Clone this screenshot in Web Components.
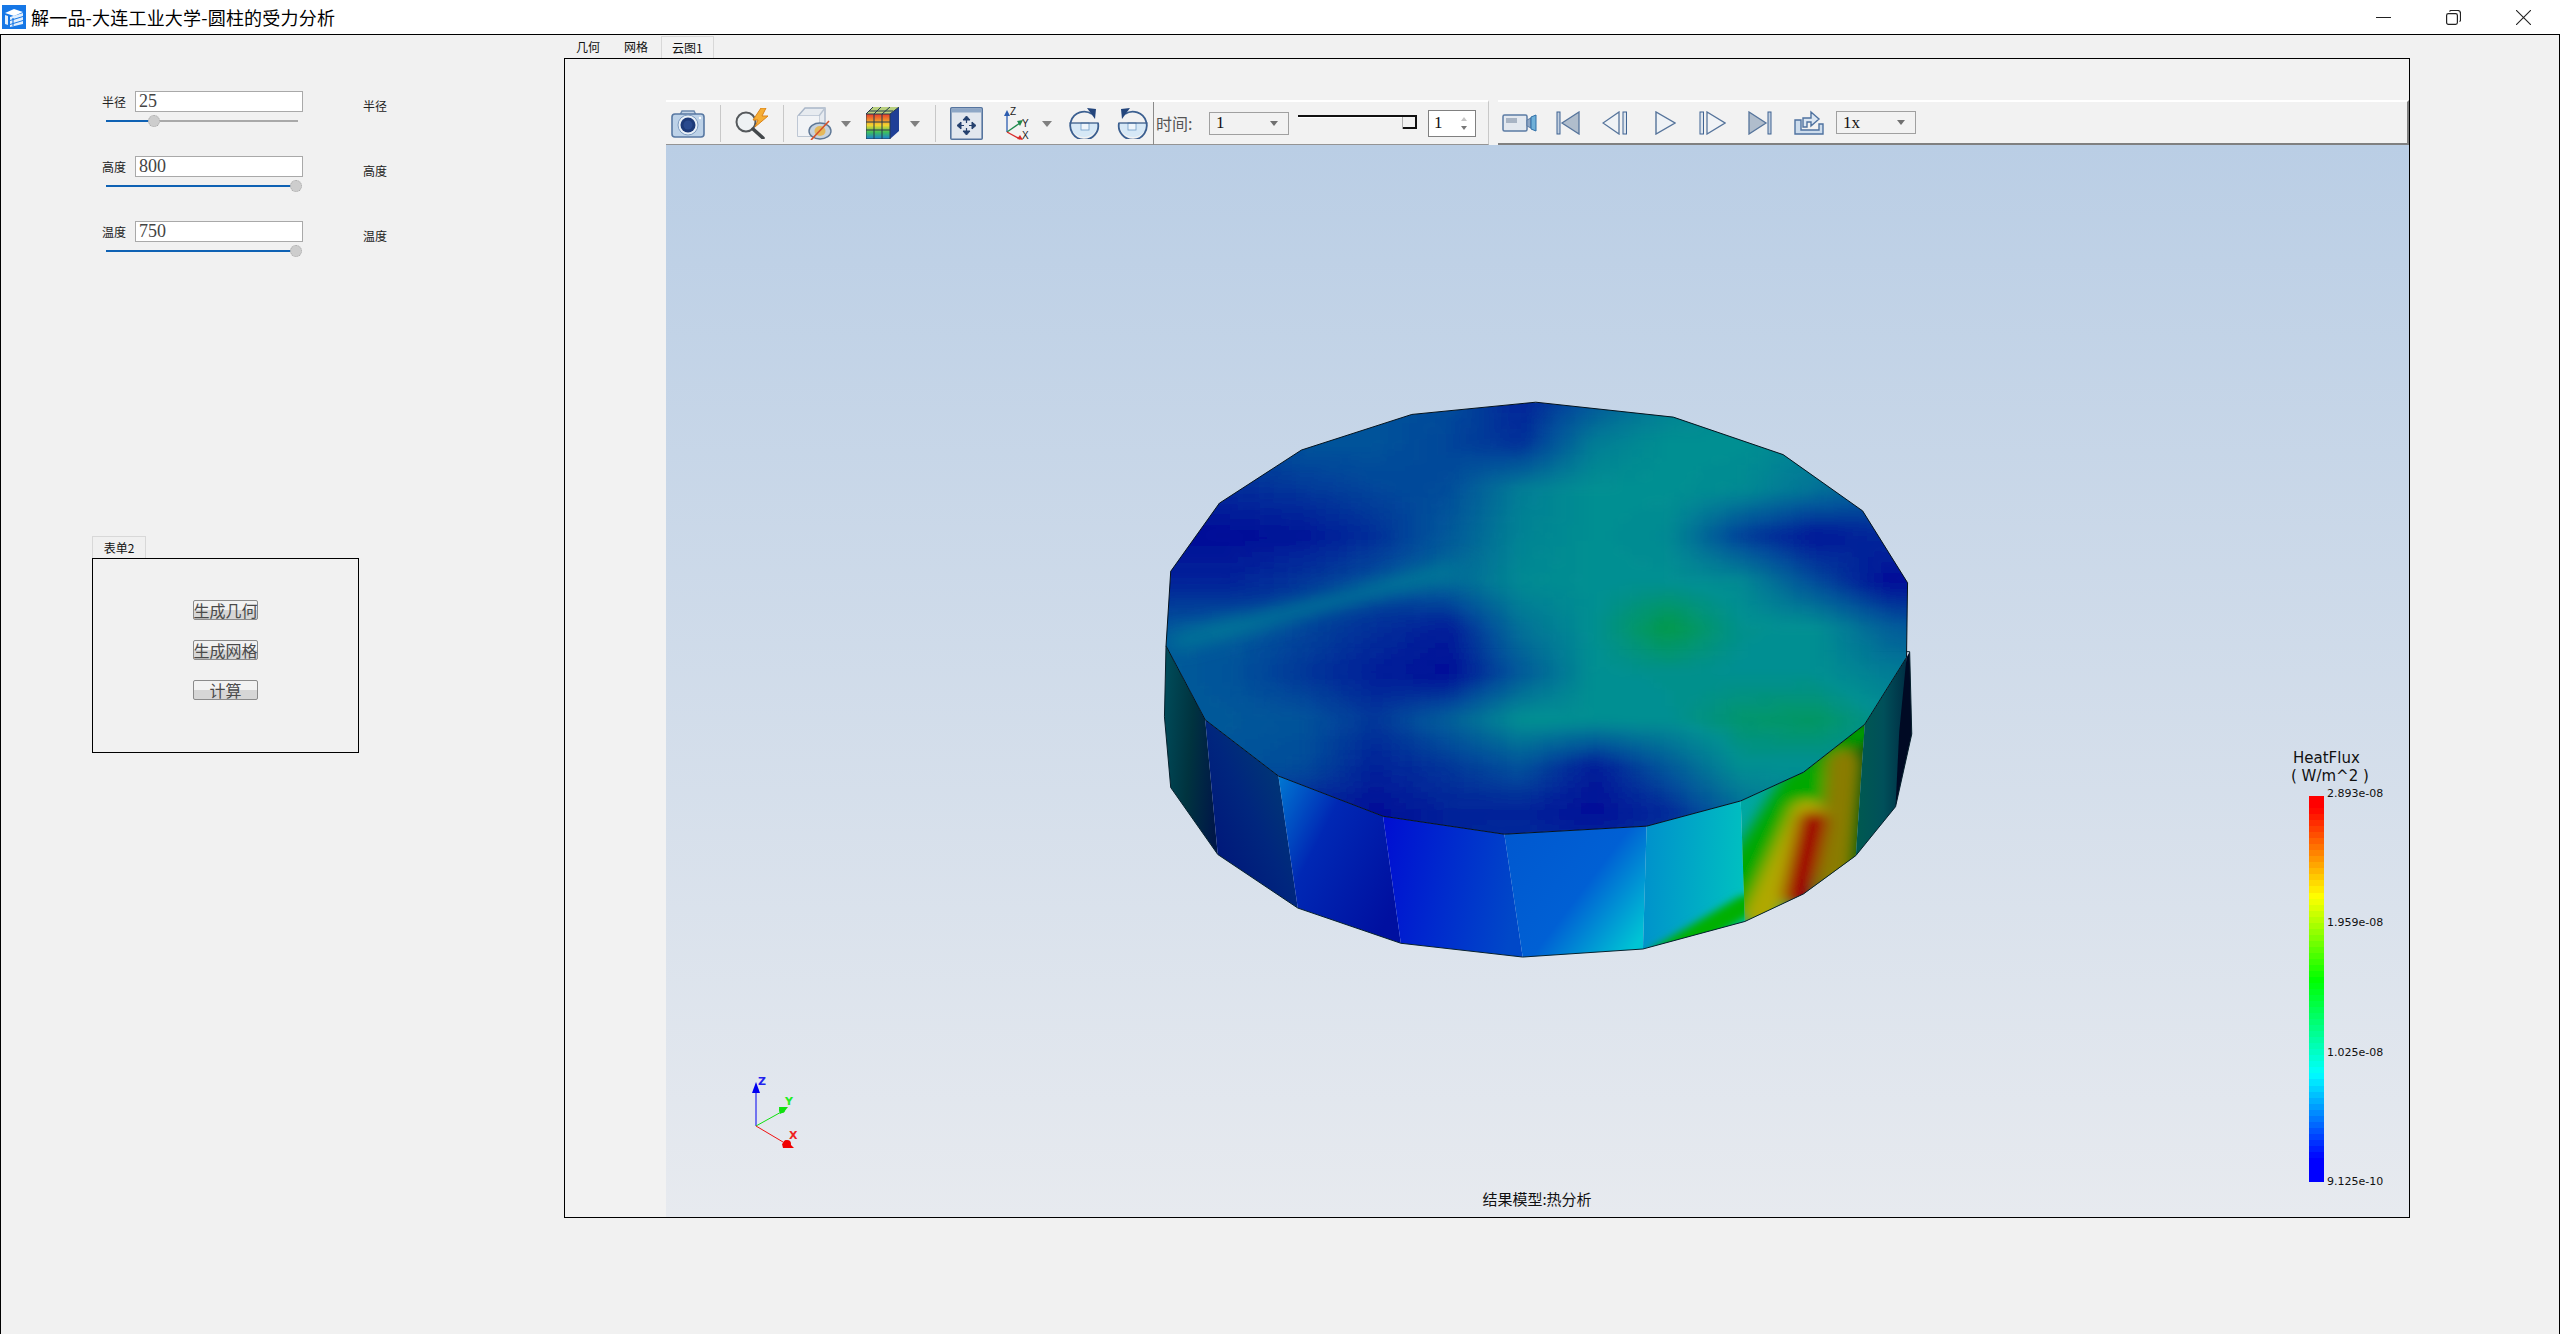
<!DOCTYPE html>
<html lang="zh">
<head>
<meta charset="utf-8">
<title>解一品-大连工业大学-圆柱的受力分析</title>
<style>
  html, body { margin: 0; height: 100%; overflow: hidden; background: #f0f0f0; }
  body { font-family: "Noto Sans CJK SC", "Liberation Sans", sans-serif; }
</style>
</head>
<body>
<app-window></app-window>

<script>
const CJK = '"Noto Sans CJK SC", "Noto Sans", sans-serif';
const SERIF = '"Liberation Serif", "Noto Sans CJK SC", serif';

// Base: every element only has to give its markup
class ShadowEl extends HTMLElement {
  constructor() {
    super();
    this.attachShadow({ mode: 'open' });
  }
  connectedCallback() {
    this.shadowRoot.innerHTML = this.render();
  }
}

// Toolbar icons, one svg per name
const ICONS = {
  camera: [34, 29, `
    <path d="M9 6l2-4h12l2 4" fill="#c4d4e6" stroke="#6d8bb0" stroke-width="1.5"/>
    <rect x="1" y="5" width="32" height="23" rx="3" fill="#bdd2e8" stroke="#5878a2" stroke-width="1.6"/>
    <circle cx="17" cy="16" r="10" fill="#e9f0f7" stroke="#7f9cc0"/>
    <circle cx="17" cy="16" r="7.5" fill="#1d3a78"/>
    <circle cx="17" cy="16" r="4.5" fill="#2a4a8e"/>
    <circle cx="29" cy="9" r="1.2" fill="#fff"/>`],
  search: [35, 31, `
    <circle cx="12" cy="14" r="9.5" fill="#eef2f4" stroke="#55595c" stroke-width="2"/>
    <path d="M19 21l10 9" stroke="#44484b" stroke-width="3.500" stroke-linecap="round"/>
    <path d="M27 0L19 12h5l-3 7 13-11h-6l4-8z" fill="#f6ae35" stroke="#d9831a"/>`],
  hide: [35, 33, `
    <path d="M1 9l7-8h20v21l-6 7H1z" fill="#e7ebf0" stroke="#a9b6c8" stroke-width="1.4"/>
    <path d="M1 9h21v20M22 9l6-8" fill="none" stroke="#b9c4d2" stroke-width="1.4"/>
    <path d="M1 9h21v20H1z" fill="#f1f3f6"/>
    <ellipse cx="23" cy="24" rx="11" ry="8" fill="#c7d3df" stroke="#5f7896" stroke-width="1.4"/>
    <ellipse cx="23" cy="24" rx="5.5" ry="5" fill="#e5b95b"/>
    <path d="M32 14L14 33" stroke="#d5512a" stroke-width="1.6"/>`],
  colors: [33, 32, `
    <defs><linearGradient id="cc" x1="0" y1="0" x2="0" y2="1">
      <stop offset="0" stop-color="#e83a2a"/><stop offset=".45" stop-color="#f4d62f"/>
      <stop offset=".72" stop-color="#3fc05a"/><stop offset="1" stop-color="#1b7fd8"/></linearGradient></defs>
    <path d="M0 7h24v25H0z" fill="url(#cc)"/>
    <path d="M0 7l7-7h26l-9 7z" fill="#b9d07f"/>
    <path d="M24 7l9-7v24l-9 8z" fill="#1f3f96"/>
    <path d="M0 7h24v25H0zM8 7v25M16 7v25M0 15h24M0 23h24M24 7l9-7M7 0l-7 7M15 0l-7 7M24 0l-8 7M3 4h24" fill="none" stroke="#24384f" stroke-width="1"/>`],
  fit: [33, 33, `
    <rect x=".8" y=".8" width="31.4" height="31.4" rx="1" fill="#e2e7ee" stroke="#56759f" stroke-width="1.6"/>
    <rect x="1.5" y="1.5" width="30" height="4" fill="#8ea7c6"/>
    <g fill="#24406e" stroke="#24406e">
      <path d="M16.500 9l-3.500 4h7zM16.500 28l-3.500-4h7zM7 18.500l4-3.500v7zM26 18.500l-4-3.500v7z"/>
      <path d="M16.500 12v4M16.500 21v4M10 18.500h4M19 18.500h4" stroke-width="1.2"/>
    </g>`],
  axes: [28, 33, `
    <path d="M5 25V7" stroke="#2b5cb0" stroke-width="1.3"/><path d="M5 3l-3 6h6z" fill="#2b5cb0"/>
    <path d="M5 25l13-9" stroke="#1f8a4c" stroke-width="1.3"/><path d="M21 13l-6 1 3 5z" fill="#1f8a4c"/>
    <path d="M5 25l13 7" stroke="#d92b2b" stroke-width="1.3"/><path d="M21 33l-6-1 3-4z" fill="#d92b2b"/>
    <g font-family="Liberation Sans, sans-serif" font-size="10" fill="#222">
      <text x="8" y="8">Z</text><text x="20" y="20">Y</text><text x="20" y="32">X</text></g>`],
  rotR: [32, 31, `
    <path d="M2 15a14 14 0 0 0 28 0z" fill="#d6e8f6"/>
    <rect x="13" y="15" width="8" height="7" fill="#eef5fb" stroke="#6f9cc8" stroke-width=".8"/>
    <path d="M1.500 15h29" stroke="#2c4f80" stroke-width="1.2"/>
    <path d="M24 6A14 14 0 1 0 30 15" fill="none" stroke="#3b5f90" stroke-width="1.800"/>
    <path d="M19 0l9 1-1 10z" fill="#24467c"/>`],
  rotL: [31, 31, `
    <path d="M30 15a14 14 0 0 1-28 0z" fill="#d6e8f6"/>
    <rect x="11" y="15" width="8" height="7" fill="#eef5fb" stroke="#6f9cc8" stroke-width=".8"/>
    <path d="M30.500 15h-29" stroke="#2c4f80" stroke-width="1.2"/>
    <path d="M8 6A14 14 0 1 1 2 15" fill="none" stroke="#3b5f90" stroke-width="1.800"/>
    <path d="M13 0L4 1l1 10z" fill="#24467c"/>`],
  video: [35, 18, `
    <rect x="1" y="1" width="24" height="16" rx="1.500" fill="#e3e8ef" stroke="#5b7ba4" stroke-width="1.500"/>
    <rect x="4" y="4" width="11" height="5" fill="#a8b4c4"/>
    <path d="M25 6l4-2v10l-4-2z" fill="#8ea6c4" stroke="#5b7ba4"/>
    <path d="M29 3l5-2v16l-5-2z" fill="#6fb0d8" stroke="#2f6fa8"/>`],
  first: [24, 24, `
    <rect x="1" y="1" width="3" height="22" fill="#c3d0e0" stroke="#3f6392"/>
    <path d="M23 1v22L6 12z" fill="#b0bdcc" stroke="#56749b" stroke-width="1.300"/>`],
  prev: [28, 24, `
    <path d="M17 1v22L1 12z" fill="#f0f3f6" stroke="#56749b" stroke-width="1.300"/>
    <rect x="21" y="1" width="3.500" height="22" fill="#dfe6ee" stroke="#3f6392"/>`],
  play: [21, 24, `<path d="M1 1v22l19-11z" fill="#eef2f6" stroke="#56749b" stroke-width="1.400"/>`],
  next: [27, 24, `
    <rect x="1" y="1" width="3.500" height="22" fill="#dfe6ee" stroke="#3f6392"/>
    <path d="M8 1v22l18-11z" fill="#f0f3f6" stroke="#56749b" stroke-width="1.300"/>`],
  last: [25, 24, `
    <path d="M1 1v22l17-11z" fill="#b0bdcc" stroke="#56749b" stroke-width="1.300"/>
    <rect x="20" y="1" width="3" height="22" fill="#c3d0e0" stroke="#3f6392"/>`],
  share: [30, 25, `
    <path d="M1 10h6v10h18v-6h4v10H1z" fill="#cddcec" stroke="#4f72a0" stroke-width="1.400"/>
    <path d="M9 17V8h8V2l8 7-8 7v-4h-4v5z" fill="#dbe6f2" stroke="#4f72a0" stroke-width="1.400"/>`]
};

class ToolIcon extends ShadowEl {
  render() {
    const [w, h, body] = ICONS[this.getAttribute('name')];
    return `<style>
      :host { display: block; flex: none; line-height: 0; }
    </style><svg width="${w}" height="${h}" viewBox="0 0 ${w} ${h}">${body}</svg>`;
  }
}
customElements.define('tool-icon', ToolIcon);

// Little grey triangle next to an icon
class DropArrow extends ShadowEl {
  render() {
    return `<style>
      :host { display: block; flex: none; width: 0; height: 0; margin-top: 2px;
              border: 5px solid transparent; border-top: 6px solid #808080; border-bottom: 0; }
    </style>`;
  }
}
customElements.define('drop-arrow', DropArrow);

class ToolSep extends ShadowEl {
  render() {
    return `<style>
      :host { display: block; flex: none; width: 1px; height: 37px; background: #c8c8c8; }
      :host([dark]) { height: 43px; background: #8a8a8a; align-self: flex-start; }
    </style>`;
  }
}
customElements.define('tool-sep', ToolSep);

class ComboBox extends ShadowEl {
  render() {
    return `<style>
      :host { display: flex; flex: none; box-sizing: border-box; width: 80px; height: 23px; align-items: center;
              justify-content: space-between; padding: 0 10px 0 6px; border: 1px solid #a0a0a0;
              font: 17px ${SERIF}; color: #111; }
      i { width: 0; height: 0; border: 4px solid transparent; border-top: 5px solid #707070; border-bottom: 0; }
    </style><slot></slot><i></i>`;
  }
}
customElements.define('combo-box', ComboBox);

class SpinBox extends ShadowEl {
  render() {
    return `<style>
      :host { display: flex; flex: none; box-sizing: border-box; width: 48px; height: 27px; align-items: center;
              justify-content: space-between; padding: 0 8px 0 5px; background: #fff; border: 1px solid #808080;
              font: 17px ${SERIF}; color: #111; }
      div { display: flex; flex-direction: column; gap: 5px; }
      i { width: 0; height: 0; border: 3px solid transparent; }
      i.up { border-bottom: 4px solid #c4c4c4; border-top: 0; }
      i.dn { border-top: 4px solid #777; border-bottom: 0; }
    </style><slot></slot><div><i class="up"></i><i class="dn"></i></div>`;
  }
}
customElements.define('spin-box', SpinBox);

// Time slider: flat line, raised square handle at the end
class TimeSlider extends ShadowEl {
  render() {
    return `<style>
      :host { display: flex; flex: none; flex-direction: column; box-sizing: border-box; width: 119px; height: 15px;
              border-top: 2px solid #111; margin-top: -1px; }
      .shine { height: 1px; background: #fff; margin-right: 14px; }
      .grip { align-self: flex-end; box-sizing: border-box; width: 14px; height: 12px; background: #f2f2f2;
              margin-top: -1px; border-right: 2px solid #111; border-bottom: 2px solid #111; box-shadow: -1px 0 0 #b0b0b0; }
    </style><div class="shine"></div><div class="grip"></div>`;
  }
}
customElements.define('time-slider', TimeSlider);

class TitleBar extends ShadowEl {
  render() {
    return `<style>
      :host { display: flex; flex: none; align-items: center; height: 34px; padding: 0 2px; background: #fff;
              font: 18px/34px ${CJK}; color: #000; letter-spacing: .2px; }
      .logo { margin-right: 5px; margin-top: 0; line-height: 0; }
      .ctl { display: flex; margin-left: auto; }
      .ctl div { display: flex; width: 70px; justify-content: center; line-height: 0; }
    </style>
    <div class="logo"><svg width="24" height="24" viewBox="0 0 24 24">
      <rect width="24" height="24" fill="#1677e6"/>
      <path d="M3 8l9-4 9 3-9 4z" fill="#fff"/>
      <path d="M3 10l3 1v9l-3-1zM8 12l13-4v3l-13 4zM8 16l13-4v3l-13 4zM8 20l13-4v3l-13 3z" fill="#e3effc"/>
      <path d="M11 13v8" stroke="#1677e6" stroke-width="1.200"/>
    </svg></div>
    <span><slot></slot></span>
    <div class="ctl">
      <div><svg width="15" height="15" viewBox="0 0 15 15"><path d="M0 7.500h15" stroke="#222"/></svg></div>
      <div><svg width="15" height="15" viewBox="0 0 15 15" fill="none" stroke="#222" stroke-width="1.200">
        <rect x=".6" y="3.600" width="10.800" height="10.800" rx="1.800"/><path d="M3.500 1.500c.3-.6.8-1 1.600-1h6.500c1.600 0 2.900 1.300 2.900 2.900v6.500c0 .8-.4 1.300-1 1.600"/></svg></div>
      <div><svg width="15" height="15" viewBox="0 0 15 15"><path d="M0 0l15 15M15 0L0 15" stroke="#222" stroke-width="1.100"/></svg></div>
    </div>`;
  }
}
customElements.define('title-bar', TitleBar);

// label + value box + slider + second label
class ParamRow extends ShadowEl {
  render() {
    const label = this.getAttribute('label');
    const pos = this.getAttribute('pos');
    return `<style>
      :host { display: grid; grid-template-columns: 24px 168px 24px; column-gap: 9px; height: 65px;
              grid-template-rows: 21px 20px; align-content: start; font: 12px/16px ${CJK}; color: #222; }
      .name { align-self: center; }
      .val { box-sizing: border-box; height: 21px; padding-left: 3px; background: #fff; border: 1px solid #a9a9a9;
             font: 18px/19px ${SERIF}; color: #444; }
      .again { margin-left: 51px; margin-top: 7px; white-space: nowrap; }
      .track { grid-column: 1 / 3; position: relative; height: 2px; width: 192px; margin: 8px 0 0 4px;
               background: #a9a9a9; }
      .fill { height: 2px; background: #0f62b4; }
      .thumb { position: absolute; top: -5px; width: 10px; height: 10px; margin-left: -5px; border-radius: 50%;
               background: #cdcdcd; border: 1px dotted #a8a8a8; box-sizing: content-box; }
    </style>
    <div class="name">${label}</div>
    <div class="val">${this.getAttribute('value')}</div>
    <div class="again">${label}</div>
    <div class="track"><div class="fill" style="width:${pos}%"></div><div class="thumb" style="left:${pos}%"></div></div>`;
  }
}
customElements.define('param-row', ParamRow);

class PushButton extends ShadowEl {
  render() {
    return `<style>
      :host { display: flex; box-sizing: border-box; width: 65px; height: 20px; justify-content: center;
              align-items: center; white-space: nowrap; border: 1px solid #8a8a8a; border-radius: 2px;
              background: linear-gradient(#f2f2f2 50%, #d6d6d6 50%); font: 16px/17px ${CJK}; color: #4a4a4a; }
    </style><slot></slot>`;
  }
}
customElements.define('push-button', PushButton);

// Group box with the "表单2" tab on its top edge
class FormTabs extends ShadowEl {
  render() {
    return `<style>
      :host { display: block; width: 267px; font: 12px/22px ${CJK}; color: #111; }
      .tab { box-sizing: border-box; width: 54px; height: 22px; text-align: center; background: #f0f0f0;
             border: 1px solid #d8d8d8; border-bottom: 0; }
      .box { box-sizing: border-box; height: 195px; border: 1px solid #000; padding-top: 41px; display: flex;
             flex-direction: column; align-items: center; gap: 20px; }
    </style>
    <div class="tab">${this.getAttribute('label')}</div>
    <div class="box"><slot></slot></div>`;
  }
}
customElements.define('form-tabs', FormTabs);

class SidePanel extends ShadowEl {
  render() {
    return `<style>
      :host { display: block; flex: none; width: 563px; box-sizing: border-box; padding: 56px 0 0 101px; }
      .lower { margin: 250px 0 0 -10px; }
    </style>
    <param-row label="半径" value="25" pos="24.500"></param-row>
    <param-row label="高度" value="800" pos="98.500"></param-row>
    <param-row label="温度" value="750" pos="98.500"></param-row>
    <div class="lower"><form-tabs label="表单2">
      <push-button>生成几何</push-button>
      <push-button>生成网格</push-button>
      <push-button>计算</push-button>
    </form-tabs></div>`;
  }
}
customElements.define('side-panel', SidePanel);

class ViewToolbar extends ShadowEl {
  render() {
    const at = (n) => `style="margin-left:${n}px"`;
    return `<style>
      :host { display: flex; flex: none; height: 45px; }
      .strip { display: flex; align-items: center; box-sizing: border-box; height: 45px; border-top: 2px solid #fff; }
      .left { width: 823px; border-bottom: 1px solid #949494; border-right: 1px solid #c8c8c8; }
      .right { flex: 1; margin-left: 9px; border-bottom: 2px solid #808080; border-right: 2px solid #808080; }
      .time { flex: none; font: 16px/20px ${CJK}; color: #555; width: 41px; white-space: nowrap; }
    </style>
    <div class="strip left">
      <tool-icon name="camera" ${at(5)}></tool-icon>
      <tool-sep ${at(15)}></tool-sep>
      <tool-icon name="search" ${at(13)}></tool-icon>
      <tool-sep ${at(14)}></tool-sep>
      <tool-icon name="hide" ${at(13)}></tool-icon>
      <drop-arrow ${at(9)}></drop-arrow>
      <tool-icon name="colors" ${at(15)}></tool-icon>
      <drop-arrow ${at(11)}></drop-arrow>
      <tool-sep ${at(15)}></tool-sep>
      <tool-icon name="fit" ${at(14)}></tool-icon>
      <tool-icon name="axes" ${at(19)}></tool-icon>
      <drop-arrow ${at(12)}></drop-arrow>
      <tool-icon name="rotR" ${at(16)}></tool-icon>
      <tool-icon name="rotL" ${at(17)}></tool-icon>
      <tool-sep dark ${at(5)}></tool-sep>
      <div class="time" ${at(2)}>时间:</div>
      <combo-box ${at(12)}>1</combo-box>
      <time-slider ${at(9)}></time-slider>
      <spin-box ${at(11)}>1</spin-box>
    </div>
    <div class="strip right">
      <tool-icon name="video" ${at(4)}></tool-icon>
      <tool-icon name="first" ${at(19)}></tool-icon>
      <tool-icon name="prev" ${at(22)}></tool-icon>
      <tool-icon name="play" ${at(25)}></tool-icon>
      <tool-icon name="next" ${at(23)}></tool-icon>
      <tool-icon name="last" ${at(22)}></tool-icon>
      <tool-icon name="share" ${at(21)}></tool-icon>
      <combo-box ${at(12)}>1x</combo-box>
    </div>`;
  }
}
customElements.define('view-toolbar', ViewToolbar);

// Result value on the top face, sampled by eye: 0 deep blue, .5 mid blue, 1 teal, above 1 green.
// Columns start at x=60, step 140. Rows start at y=40, step 120.
const TOP_FIELD = [
  [.5, .5, .5, .5, .45, .15, .5, .85, 1, 1, 1, 1],
  [.4, .4, .5, .5, .4, .25, .85, 1, 1, .9, .8, .8],
  [.15, .2, .3, .4, .45, .85, 1, 1, .95, .75, .55, .55],
  [0, 0, .05, .25, .55, .9, 1, .95, .35, .05, .2, .3],
  [.15, .15, .3, .45, .65, .95, 1, 1, .95, .45, 0, 0],
  [.5, .55, .4, .25, .1, .75, 1, 1.3, 1.02, 1, .6, .4],
  [.6, .5, .3, .12, 0, .55, 1, 1.02, 1, 1, .85, .8],
  [.55, .55, .5, .3, .6, 1, 1, 1, 1.15, 1.2, 1, 1],
  [.5, .5, .45, .15, .3, .5, .1, .55, 1, 1, 1, 1],
  [.4, .3, .15, 0, .15, .15, 0, .2, .7, 1, 1, 1],
  [.3, .2, .1, 0, .15, .25, .25, .4, .7, 1, 1, 1]
];

function fieldColor(v) {
  const stops = [[0, [0, 12, 152]], [.5, [0, 82, 154]], [1, [0, 143, 146]], [1.3, [0, 154, 72]]];
  let i = 0;
  while (i < stops.length - 2 && v > stops[i + 1][0]) i++;
  const k = (v - stops[i][0]) / (stops[i + 1][0] - stops[i][0]);
  return 'rgb(' + stops[i][1].map((c, j) => Math.round(c + (stops[i + 1][1][j] - c) * k)) + ')';
}

// Small cells grouped by colour level, so it stays a handful of paths
function topFieldPaths() {
  const levels = {};
  const cell = 14;
  for (let y = 0; y < 1260; y += cell) {
    for (let x = 0; x < 1600; x += cell) {
      const gx = Math.min(Math.max((x - 60) / 140, 0), 10.999);
      const gy = Math.min(Math.max((y - 40) / 120, 0), 9.999);
      const cx = Math.floor(gx), cy = Math.floor(gy);
      const fx = gx - cx, fy = gy - cy;
      const v = (TOP_FIELD[cy][cx] * (1 - fx) + TOP_FIELD[cy][cx + 1] * fx) * (1 - fy) +
                (TOP_FIELD[cy + 1][cx] * (1 - fx) + TOP_FIELD[cy + 1][cx + 1] * fx) * fy;
      const lv = Math.round(v * 40);
      levels[lv] = (levels[lv] || '') + `M${x} ${y}h${cell + 1}v${cell + 1}h-${cell + 1}z`;
    }
  }
  return Object.keys(levels).map(lv => `<path d="${levels[lv]}" fill="${fieldColor(lv / 40)}"/>`).join('');
}

// The cylinder result. Coordinates come from a 1568x1568 grid stretched onto 820x600.
class DiskModel extends ShadowEl {
  render() {
    const top = '795,58 1058,97 1268,195 1420,342 1506,530 1504,725 1424,900 1307,1025 1187,1100 1007,1166 735,1187 503,1140 303,1035 163,888 88,695 97,500 190,322 347,183 558,90';
    const band = (x1, y1, x2, y2, w, c) =>
      `<line x1="${x1}" y1="${y1}" x2="${x2}" y2="${y2}" stroke="${c}" stroke-width="${w}" stroke-linecap="round"/>`;
    const grad = (id, x1, y1, x2, y2, ...stops) =>
      `<linearGradient id="${id}" x1="${x1}" y1="${y1}" x2="${x2}" y2="${y2}">` +
      stops.map(([o, c]) => `<stop offset="${o}" stop-color="${c}"/>`).join('') + `</linearGradient>`;
    const faces = {
      a: '88,695 163,888 187,1240 97,1065 85,880',
      b: '163,888 303,1035 340,1380 187,1240',
      c: '303,1035 503,1140 537,1472 340,1380',
      d: '503,1140 735,1187 770,1508 537,1472',
      e: '735,1187 1007,1166 1000,1487 770,1508',
      f: '1007,1166 1187,1100 1195,1415 1000,1487',
      g: '1187,1100 1307,1025 1424,900 1407,1243 1307,1343 1195,1415',
      i: '1424,900 1504,725 1512,925 1483,1115 1407,1243',
      j: '1504,725 1510,710 1514,925 1483,1115 1490,920'
    };
    const clip = (id, pts) => `<clipPath id="${id}"><polygon points="${pts}"/></clipPath>`;
    return `<style>
      :host { display: block; position: absolute; left: 454px; top: 235px; width: 820px; height: 600px; }
      svg { display: block; }
    </style>
    <svg width="820" height="600" viewBox="0 0 1568 1568" preserveAspectRatio="none">
      <defs>
        <filter id="soft" x="-5%" y="-5%" width="110%" height="110%"><feGaussianBlur stdDeviation="11"/></filter>
        <filter id="b22" x="-60%" y="-60%" width="220%" height="220%"><feGaussianBlur stdDeviation="22"/></filter>
        <filter id="b14" x="-60%" y="-60%" width="220%" height="220%"><feGaussianBlur stdDeviation="14"/></filter>
        <filter id="b10" x="-60%" y="-60%" width="220%" height="220%"><feGaussianBlur stdDeviation="10"/></filter>
        <clipPath id="top"><polygon points="${top}"/></clipPath>
        ${Object.keys(faces).map(k => clip('f' + k, faces[k])).join('')}
        ${grad('ga', 0, .3, 1, .6, [0, '#004a58'], [.5, '#00333f'], [1, '#001848'])}
        ${grad('gb', 1, 0, 0, 1, [0, '#00456e'], [.5, '#00267e'], [1, '#000f78'])}
        ${grad('gc', 0, 0, 1, .7, [0, '#0078d2'], [.4, '#0028b4'], [1, '#0010a0'])}
        ${grad('gd', 0, .2, 1, .4, [0, '#0010d2'], [1, '#0048c8'])}
        ${grad('ge', 0, .1, 1, .8, [0, '#0058d0'], [.55, '#0060d4'], [1, '#00c4d4'])}
        ${grad('gf', 0, .2, 1, .3, [0, '#0090cc'], [1, '#00c0c0'])}
        ${grad('gg', 0, .5, 1, .5, [0, '#00a8a4'], [.5, '#00a090'], [.8, '#007800'], [1, '#004c10'])}
        ${grad('gi', 0, .5, 1, .5, [0, '#005a50'], [.5, '#00505a'], [1, '#002840'])}
      </defs>

      <!-- side walls -->
      <polygon points="${faces.a}" fill="url(#ga)"/>
      <polygon points="${faces.b}" fill="url(#gb)"/>
      <polygon points="${faces.c}" fill="url(#gc)"/>
      <polygon points="${faces.d}" fill="url(#gd)"/>
      <polygon points="${faces.e}" fill="url(#ge)"/>
      <polygon points="${faces.f}" fill="url(#gf)"/>
      <g clip-path="url(#ff)"><g filter="url(#b10)">${band(1040, 1500, 1200, 1370, 50, '#00b000')}</g></g>
      <polygon points="${faces.g}" fill="url(#gg)"/>
      <g clip-path="url(#fg)">
        <g filter="url(#b14)">
          ${band(1310, 1040, 1420, 920, 50, '#00a000')}
          ${band(1175, 1350, 1310, 1060, 95, '#00a800')}
          ${band(1400, 950, 1390, 1240, 26, '#008000')}
          ${band(1365, 1320, 1385, 1000, 66, '#8a7c00')}
          ${band(1225, 1400, 1315, 1130, 66, '#b0a800')}
          ${band(1295, 1345, 1325, 1155, 56, '#a00000')}
        </g>
      </g>
      <polygon points="${faces.i}" fill="url(#gi)"/>
      <polygon points="${faces.j}" fill="#000a24"/>
      <polygon points="88,695 85,880 97,1065 187,1240 340,1380 537,1472 770,1508 1000,1487 1195,1415 1307,1343 1407,1243 1483,1115 1514,925 1510,710"
        fill="none" stroke="#06202c" stroke-width="1" vector-effect="non-scaling-stroke"/>

      <!-- top face -->
      <g clip-path="url(#top)">
        <g filter="url(#soft)">${topFieldPaths()}</g>
        <g filter="url(#b22)">${band(110, 685, 640, 495, 38, '#007a96')}</g>
      </g>
      <polygon points="${top}" fill="none" stroke="#04121c" stroke-width="1" vector-effect="non-scaling-stroke"/>
    </svg>`;
  }
}
customElements.define('disk-model', DiskModel);

// Colour scale, stepped like the VTK one
class ColorLegend extends ShadowEl {
  render() {
    const stops = [[0, [255, 0, 0]], [.03, [255, 0, 0]], [.26, [255, 255, 0]], [.477, [0, 255, 0]], [.72, [0, 255, 255]], [.94, [0, 0, 255]], [1, [0, 0, 255]]];
    let bands = '';
    for (let n = 0; n < 64; n++) {
      const t = (n + .5) / 64;
      let i = 0;
      while (i < stops.length - 2 && t > stops[i + 1][0]) i++;
      const k = (t - stops[i][0]) / (stops[i + 1][0] - stops[i][0]);
      const c = stops[i][1].map((v, j) => Math.round(v + (stops[i + 1][1][j] - v) * k));
      bands += `<i style="background:rgb(${c})"></i>`;
    }
    return `<style>
      :host { display: block; position: absolute; left: 1625px; top: 604px; width: 110px;
              font-family: "DejaVu Sans", sans-serif; color: #111; }
      .title { font-size: 15px; line-height: 18px; white-space: pre; margin-left: 2px; height: 42px; }
      .title div + div { margin-left: -2px; }
      .row { display: flex; margin-left: 18px; }
      .bar { flex: none; width: 15px; height: 386px; display: flex; flex-direction: column; margin-top: 5px; }
      .bar i { flex: 1; }
      .ticks { display: flex; flex-direction: column; justify-content: space-between; height: 401px;
               margin: -4px 0 0 3px; font-size: 11px; line-height: 13px; }
    </style>
    <div class="title"><div>HeatFlux</div><div>( W/m^2 )</div></div>
    <div class="row"><div class="bar">${bands}</div>
      <div class="ticks"><span>2.893e-08</span><span>1.959e-08</span><span>1.025e-08</span><span>9.125e-10</span></div></div>`;
  }
}
customElements.define('color-legend', ColorLegend);

class AxisTriad extends ShadowEl {
  render() {
    return `<style>
      :host { display: block; position: absolute; left: 34px; top: 905px; width: 140px; height: 120px; }
    </style>
    <svg width="140" height="120" viewBox="0 0 140 120">
      <path d="M56 76V36" stroke="#0000f0" stroke-width="1"/><path d="M56 32l-4 11h8z" fill="#0000f0"/>
      <path d="M56 76l27-15" stroke="#10e010" stroke-width="1"/><path d="M88 57l-9 0 1 7 4-2z" fill="#10e010"/>
      <circle cx="82" cy="60" r="3" fill="#10e010"/>
      <path d="M56 76l27 16" stroke="#f01010" stroke-width="1"/><path d="M94 98l-11 0-1-4 4-4z" fill="#f00000"/>
      <circle cx="87" cy="94" r="4" fill="#f00000"/>
      <g font-family="DejaVu Sans, sans-serif" font-size="11" font-weight="bold">
        <text x="58" y="35" fill="#2222ee">Z</text>
        <text x="85" y="55" fill="#22ee22">Y</text>
        <text x="89" y="89" fill="#ee2222">X</text>
      </g>
    </svg>`;
  }
}
customElements.define('axis-triad', AxisTriad);

class ResultView extends ShadowEl {
  render() {
    return `<style>
      :host { display: flex; flex-direction: column; height: 100%; }
      .scene { position: relative; flex: 1; display: flex; flex-direction: column; justify-content: flex-end;
               align-items: center; background: linear-gradient(#bacee5, #e7eaef); }
      .caption { font: 15px/20px ${CJK}; color: #111; margin-bottom: 8px; margin-left: -1px; }
    </style>
    <view-toolbar></view-toolbar>
    <div class="scene">
      <disk-model></disk-model>
      <axis-triad></axis-triad>
      <color-legend></color-legend>
      <div class="caption">结果模型:热分析</div>
    </div>`;
  }
}
customElements.define('result-view', ResultView);

class ResultTabs extends ShadowEl {
  render() {
    return `<style>
      :host { display: block; flex: none; width: 1846px; padding-top: 1px; font: 12px/22px ${CJK}; color: #111; }
      .bar { display: flex; height: 22px; }
      .tab { padding: 0 12px; }
      .tab.on { padding: 0 10px; margin-left: 1px; border: 1px solid #d8d8d8; border-bottom: 0; background: #f2f2f2; height: 21px; line-height: 21px; }
      .frame { box-sizing: border-box; height: 1160px; border: 1px solid #000; background: #f2f2f2; padding: 41px 0 0 101px; }
    </style>
    <div class="bar"><div class="tab">几何</div><div class="tab">网格</div><div class="tab on">云图1</div></div>
    <div class="frame"><result-view></result-view></div>`;
  }
}
customElements.define('result-tabs', ResultTabs);

class AppWindow extends ShadowEl {
  render() {
    return `<style>
      :host { display: flex; flex-direction: column; height: 1334px; }
      .work { flex: 1; display: flex; background: #f1f1f1; border: 1px solid #000; border-bottom: 0; }
    </style>
    <title-bar>解一品-大连工业大学-圆柱的受力分析</title-bar>
    <div class="work"><side-panel></side-panel><result-tabs></result-tabs></div>`;
  }
}
customElements.define('app-window', AppWindow);
</script>
</body>
</html>
